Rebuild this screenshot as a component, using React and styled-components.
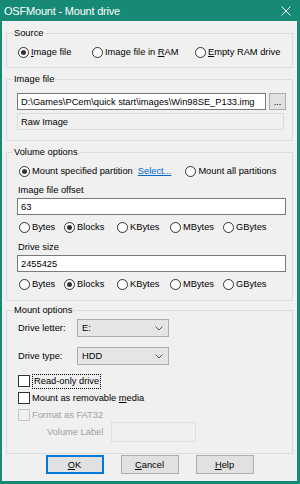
import styled, { createGlobalStyle } from "styled-components";

const GlobalStyle = createGlobalStyle`
  html, body { margin: 0; padding: 0; background: #ffffff; }
  body {
    font-family: "Liberation Sans", Arial, sans-serif;
    font-size: 9.3px;
    color: #000;
  }
  * { box-sizing: border-box; }
`;

const Window = styled.div`
  width: 300px;
  height: 484px;
  display: flex;
  flex-direction: column;
  background: #178a76;
  padding: 0 3px 3px 2px;
`;

const TitleBar = styled.div`
  height: 21px;
  display: flex;
  align-items: center;
  justify-content: space-between;
  padding: 0 6px 0 2px;
  color: #fff;
  font-size: 11px;
  letter-spacing: -0.2px;
`;

const Body = styled.div`
  flex: 1;
  background: #f0f0f0;
  padding: 12px 4px 0 4px;
  display: flex;
  flex-direction: column;
`;

const Group = styled.div`
  position: relative;
  border: 1px solid #dcdcdc;
  margin-top: ${(p) => p.$mt || 0}px;
  padding: ${(p) => p.$pad};
  display: flex;
  flex-direction: column;
`;

const Caption = styled.span`
  position: absolute;
  top: -7px;
  left: 6px;
  padding: 0 1px;
  line-height: 12px;
  background: #f0f0f0;
`;

const Line = styled.div`
  display: flex;
  align-items: center;
  height: ${(p) => p.$h || 12}px;
  margin-top: ${(p) => p.$mt || 0}px;
  margin-left: ${(p) => p.$ml || 0}px;
`;

const RadioGrid = styled.div`
  display: grid;
  grid-template-columns: ${(p) => p.$cols};
  align-items: center;
  height: 12px;
  margin-top: ${(p) => p.$mt || 0}px;
  margin-left: ${(p) => p.$ml || 0}px;
`;

const RadioLabel = styled.label`
  display: flex;
  align-items: center;
  gap: 2px;
  white-space: nowrap;
  margin-left: ${(p) => p.$ml || 0}px;
`;

const Circle = styled.span`
  width: 11px;
  height: 11px;
  border-radius: 50%;
  border: 1px solid #333;
  background: #fff;
  display: flex;
  align-items: center;
  justify-content: center;
  &::after {
    content: "";
    width: 5px;
    height: 5px;
    border-radius: 50%;
    background: ${(p) => (p.$on ? "#333" : "transparent")};
  }
`;

const Box = styled.span`
  width: 12px;
  height: 12px;
  flex: none;
  border: 1px solid ${(p) => (p.$disabled ? "#c6c6c6" : "#333")};
  background: ${(p) => (p.$disabled ? "#f0f0f0" : "#fff")};
`;

const CheckLabel = styled.label`
  display: flex;
  align-items: center;
  gap: 2px;
  height: 12px;
  margin-top: ${(p) => p.$mt || 0}px;
  color: ${(p) => (p.$disabled ? "#a0a0a0" : "#000")};
`;

const FocusText = styled.span`
  outline: 1px dotted #000;
  outline-offset: 0;
  margin-left: 1px;
  padding: 0 1px;
  line-height: 13px;
`;

const U = styled.span`
  text-decoration: underline;
`;

const Field = styled.div`
  height: ${(p) => p.$h || 17}px;
  border: 1px solid #7a7a7a;
  background: #fff;
  padding: 0 3px;
  display: flex;
  align-items: center;
  white-space: nowrap;
  overflow: hidden;
  flex: ${(p) => (p.$grow ? 1 : "none")};
  margin-top: ${(p) => p.$mt || 0}px;
`;

const ReadOnlyField = styled(Field)`
  border-color: #dcdcdc;
  background: #f0f0f0;
  margin-right: 2px;
`;

const DisabledField = styled(Field)`
  width: 85px;
  border-color: #dedede;
  background: #f0f0f0;
  margin-left: 8px;
`;

const SmallButton = styled.div`
  width: 17px;
  height: 17px;
  margin-left: 3px;
  border: 1px solid #adadad;
  background: #e1e1e1;
  display: flex;
  align-items: flex-end;
  justify-content: center;
  padding-bottom: 3px;
  line-height: 8px;
`;

const Label = styled.div`
  height: 12px;
  line-height: 12px;
  margin-top: ${(p) => p.$mt || 0}px;
  margin-left: 1px;
`;

const Link = styled.span`
  color: #0066cc;
  text-decoration: underline;
  margin-left: 5px;
`;

const FormRow = styled.div`
  display: grid;
  grid-template-columns: 59px 92px;
  align-items: center;
  margin-top: ${(p) => p.$mt || 0}px;
`;

const Select = styled.div`
  height: 18px;
  border: 1px solid #adadad;
  background: #e5e5e5;
  display: flex;
  align-items: center;
  justify-content: space-between;
  padding: 0 5px 0 4px;
`;

const VolumeRow = styled.div`
  display: flex;
  align-items: center;
  margin-top: 1px;
  padding-left: 29px;
  color: #a0a0a0;
`;

const ButtonBar = styled.div`
  display: flex;
  justify-content: center;
  gap: 17px;
  margin-top: 1px;
`;

const Button = styled.div`
  width: 58px;
  height: 19px;
  border: 1px solid ${(p) => (p.$default ? "#0078d7" : "#adadad")};
  box-shadow: ${(p) => (p.$default ? "inset 0 0 0 1px #0078d7" : "none")};
  background: #e1e1e1;
  display: flex;
  align-items: center;
  justify-content: center;
`;

const Radio = ({ on, children, ml }) => (
  <RadioLabel $ml={ml}>
    <Circle $on={on} />
    <span>{children}</span>
  </RadioLabel>
);

const Chevron = () => (
  <svg width="8" height="5" viewBox="0 0 8 5">
    <path d="M0.5 0.5 L4 4 L7.5 0.5" fill="none" stroke="#555" strokeWidth="1" />
  </svg>
);

const units = ["Bytes", "Blocks", "KBytes", "MBytes", "GBytes"];

const UnitRadios = ({ mt }) => (
  <RadioGrid $cols="45px 53px 53px 53px auto" $mt={mt} $ml={2}>
    {units.map((u) => (
      <Radio key={u} on={u === "Blocks"}>
        {u}
      </Radio>
    ))}
  </RadioGrid>
);

export default function App() {
  return (
    <>
      <GlobalStyle />
      <Window>
        <TitleBar>
          <span>OSFMount - Mount drive</span>
          <svg width="10" height="10" viewBox="0 0 10 10">
            <path d="M0.5 0.5 L9.5 9.5 M9.5 0.5 L0.5 9.5" stroke="#fff" strokeWidth="1" />
          </svg>
        </TitleBar>
        <Body>
          <Group $pad="12px 6px 9px 11px">
            <Caption>Source</Caption>
            <RadioGrid $cols="74px 103px auto">
              <Radio on>
                <U>I</U>mage file
              </Radio>
              <Radio>
                Image file in <U>R</U>AM
              </Radio>
              <Radio>
                <U>E</U>mpty RAM drive
              </Radio>
            </RadioGrid>
          </Group>

          <Group $mt={11} $pad="13px 6px 10px 10px">
            <Caption>Image file</Caption>
            <Line $h={17}>
              <Field $grow>D:\Games\PCem\quick start\images\Win98SE_P133.img</Field>
              <SmallButton>...</SmallButton>
            </Line>
            <ReadOnlyField $mt={3}>Raw Image</ReadOnlyField>
          </Group>

          <Group $mt={11} $pad="12px 6px 10px 10px">
            <Caption>Volume options</Caption>
            <Line $ml={2}>
              <Radio on>Mount specified partition</Radio>
              <Link>Select...</Link>
              <Radio ml={14}>Mount all partitions</Radio>
            </Line>
            <Label $mt={7}>Image file offset</Label>
            <Field $mt={2}>63</Field>
            <UnitRadios mt={6} />
            <Label $mt={8}>Drive size</Label>
            <Field $mt={2}>2455425</Field>
            <UnitRadios mt={6} />
          </Group>

          <Group $mt={9} $pad="8px 6px 11px 11px">
            <Caption>Mount options</Caption>
            <FormRow>
              <span>Drive letter:</span>
              <Select>
                <span>E:</span>
                <Chevron />
              </Select>
            </FormRow>
            <FormRow $mt={10}>
              <span>Drive type:</span>
              <Select>
                <span>HDD</span>
                <Chevron />
              </Select>
            </FormRow>
            <CheckLabel $mt={10}>
              <Box />
              <FocusText>Read-only drive</FocusText>
            </CheckLabel>
            <CheckLabel $mt={5}>
              <Box />
              <span>
                Mount as removable <U>m</U>edia
              </span>
            </CheckLabel>
            <CheckLabel $mt={5} $disabled>
              <Box $disabled />
              <span>Format as FAT32</span>
            </CheckLabel>
            <VolumeRow>
              <span>Volume Label</span>
              <DisabledField $h={20} />
            </VolumeRow>
          </Group>

          <ButtonBar>
            <Button $default>
              <span>
                <U>O</U>K
              </span>
            </Button>
            <Button>
              <span>
                <U>C</U>ancel
              </span>
            </Button>
            <Button>
              <span>
                <U>H</U>elp
              </span>
            </Button>
          </ButtonBar>
        </Body>
      </Window>
    </>
  );
}
